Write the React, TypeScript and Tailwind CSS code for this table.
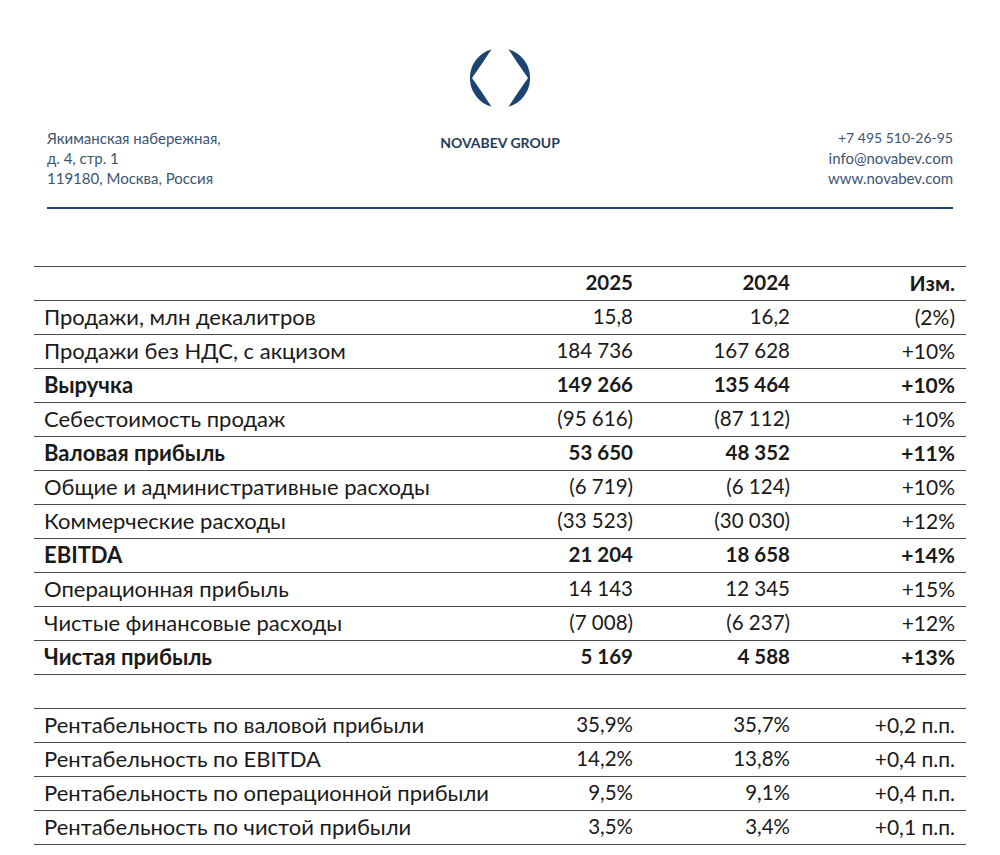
import React from "react";

type Row = { label: string; a: string; b: string; c: string; bold?: boolean };

const main: Row[] = [
  { label: "Продажи, млн декалитров", a: "15,8", b: "16,2", c: "(2%)" },
  { label: "Продажи без НДС, с акцизом", a: "184 736", b: "167 628", c: "+10%" },
  { label: "Выручка", a: "149 266", b: "135 464", c: "+10%", bold: true },
  { label: "Себестоимость продаж", a: "(95 616)", b: "(87 112)", c: "+10%" },
  { label: "Валовая прибыль", a: "53 650", b: "48 352", c: "+11%", bold: true },
  { label: "Общие и административные расходы", a: "(6 719)", b: "(6 124)", c: "+10%" },
  { label: "Коммерческие расходы", a: "(33 523)", b: "(30 030)", c: "+12%" },
  { label: "EBITDA", a: "21 204", b: "18 658", c: "+14%", bold: true },
  { label: "Операционная прибыль", a: "14 143", b: "12 345", c: "+15%" },
  { label: "Чистые финансовые расходы", a: "(7 008)", b: "(6 237)", c: "+12%" },
  { label: "Чистая прибыль", a: "5 169", b: "4 588", c: "+13%", bold: true },
];

const margins: Row[] = [
  { label: "Рентабельность по валовой прибыли", a: "35,9%", b: "35,7%", c: "+0,2 п.п." },
  { label: "Рентабельность по EBITDA", a: "14,2%", b: "13,8%", c: "+0,4 п.п." },
  { label: "Рентабельность по операционной прибыли", a: "9,5%", b: "9,1%", c: "+0,4 п.п." },
  { label: "Рентабельность по чистой прибыли", a: "3,5%", b: "3,4%", c: "+0,1 п.п." },
];

function TRow({ r }: { r: Row }) {
  return (
    <div
      className={
        "flex h-[34px] items-center border-b border-[#4a4a4a] pr-[11px] pb-[2px] leading-none " +
        (r.bold ? "font-bold" : "font-normal")
      }
    >
      <div className="flex-1 min-w-0 whitespace-nowrap pl-[10px] text-[22px]">{r.label}</div>
      <div className="w-[150px] text-right text-[20.5px]">{r.a}</div>
      <div className="w-[157px] text-right text-[20.5px]">{r.b}</div>
      <div className="w-[165px] text-right text-[21px]">{r.c}</div>
    </div>
  );
}

function Logo() {
  return (
    <svg width="60" height="60" viewBox="0 0 60 60">
      <path d="M21.5 1.2 A30 30 0 0 0 21.5 58.8 Q12 44 2 30 Q12 16 21.5 1.2 Z" fill="#1d4470" />
      <path d="M38.5 1.2 A30 30 0 0 1 38.5 58.8 Q48 44 58 30 Q48 16 38.5 1.2 Z" fill="#1d4470" />
    </svg>
  );
}

export default function App() {
  return (
    <div className="w-[1000px] h-[855px] bg-white overflow-hidden" style={{ fontFamily: "Lato, 'Open Sans', sans-serif" }}>
      <div className="px-[47px]">
        <div className="flex justify-center pt-[48px]">
          <Logo />
        </div>
        <div className="flex items-start mt-[20px] text-[15px] leading-[20px] text-[#3d5573]">
          <div className="flex-1">
            <div>Якиманская набережная,</div>
            <div>д. 4, стр. 1</div>
            <div>119180, Москва, Россия</div>
          </div>
          <div className="flex-1 text-center font-bold text-[14px] text-[#1f3d5e] pt-[5px]">NOVABEV GROUP</div>
          <div className="flex-1 text-right">
            <div className="text-[14px]">+7 495 510-26-95</div>
            <div>info@novabev.com</div>
            <div>www.novabev.com</div>
          </div>
        </div>
        <div className="mt-[19px] h-[2px] bg-[#1f4a70]" />
      </div>

      <div className="mx-[34px] mt-[57px] border-t border-[#4a4a4a] text-[#1a1a1a]">
        <div className="flex h-[34px] items-center border-b border-[#4a4a4a] pr-[11px] pb-[2px] font-bold text-[20.5px] leading-none">
          <div className="flex-1" />
          <div className="w-[150px] text-right">2025</div>
          <div className="w-[157px] text-right">2024</div>
          <div className="w-[165px] text-right text-[21px]">Изм.</div>
        </div>
        {main.map((r) => (
          <TRow key={r.label} r={r} />
        ))}
        <div className="h-[34px] border-b border-[#4a4a4a]" />
        {margins.map((r) => (
          <TRow key={r.label} r={r} />
        ))}
      </div>
    </div>
  );
}
